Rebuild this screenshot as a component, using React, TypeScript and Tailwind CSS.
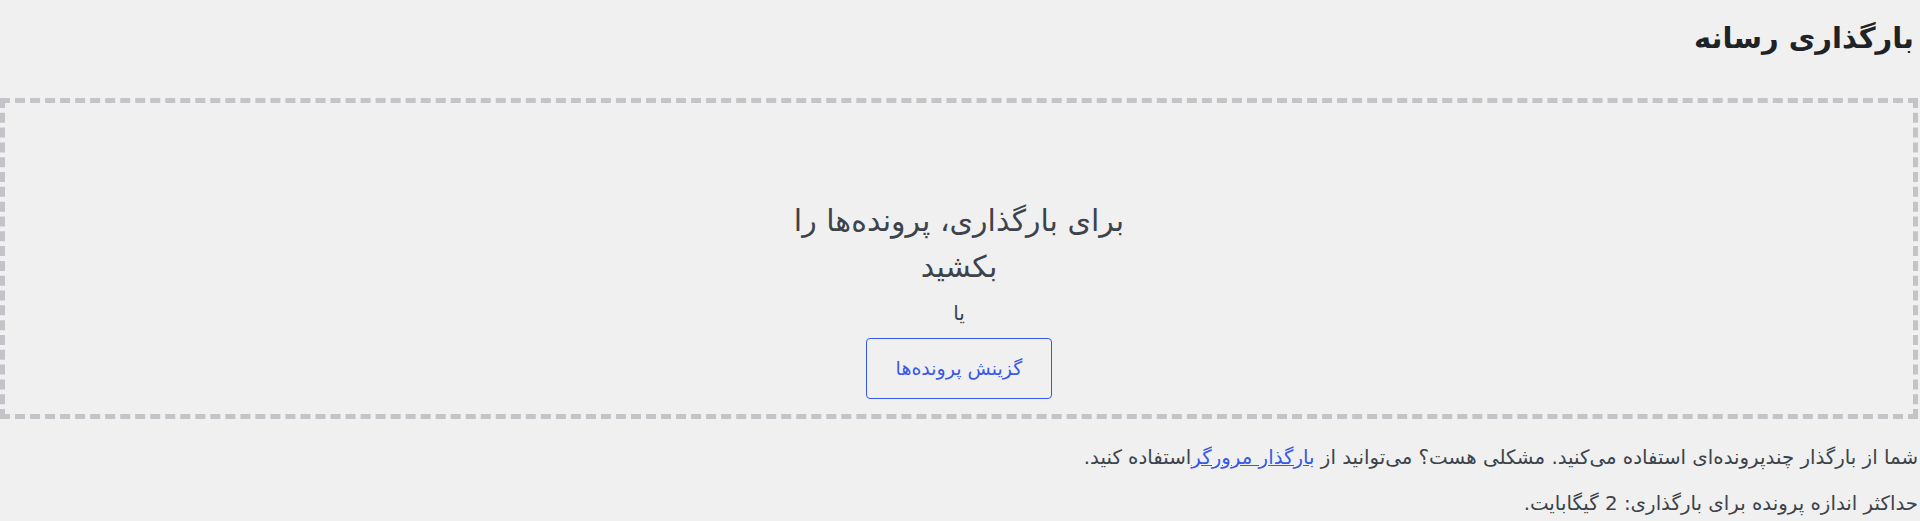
export default function App() {
  return (
    <div dir="rtl" className="min-h-[521px] bg-[#f0f0f1] text-[#3c434a] font-['DejaVu_Sans',sans-serif] overflow-hidden">
      <h1 className="pt-[19px] pr-[6px] text-[29px] leading-[38px] font-bold text-[#1d2327]">بارگذاری رسانه</h1>

      <div className="mt-[41px] mr-[2px] h-[321px] border-[5px] border-dashed border-[#c3c4c7]">
        <div className="mx-auto w-[370px] pt-[95px] text-center">
          <p className="text-[30px] leading-[46px]">برای بارگذاری، پرونده‌ها را بکشید</p>
          <p className="mt-[9px] text-[20px] leading-[28px]">یا</p>
          <button
            type="button"
            className="mt-[11px] h-[61px] w-[186px] rounded-[4px] border-[1.5px] border-[#3858e9] text-[19px] text-[#3858e9]"
          >
            گزینش پرونده‌ها
          </button>
        </div>
      </div>

      <div className="pr-[2px] text-[19.8px] leading-[28px]">
        <p className="mt-[25px]">
          شما از بارگذار چندپرونده‌ای استفاده می‌کنید. مشکلی هست؟ می‌توانید از{" "}
          <a href="#" className="text-[#3858e9] underline">بارگذار مرورگر</a>استفاده کنید.
        </p>
        <p className="mt-[18px]">حداکثر اندازه پرونده برای بارگذاری: 2 گیگابایت.</p>
      </div>
    </div>
  );
}
